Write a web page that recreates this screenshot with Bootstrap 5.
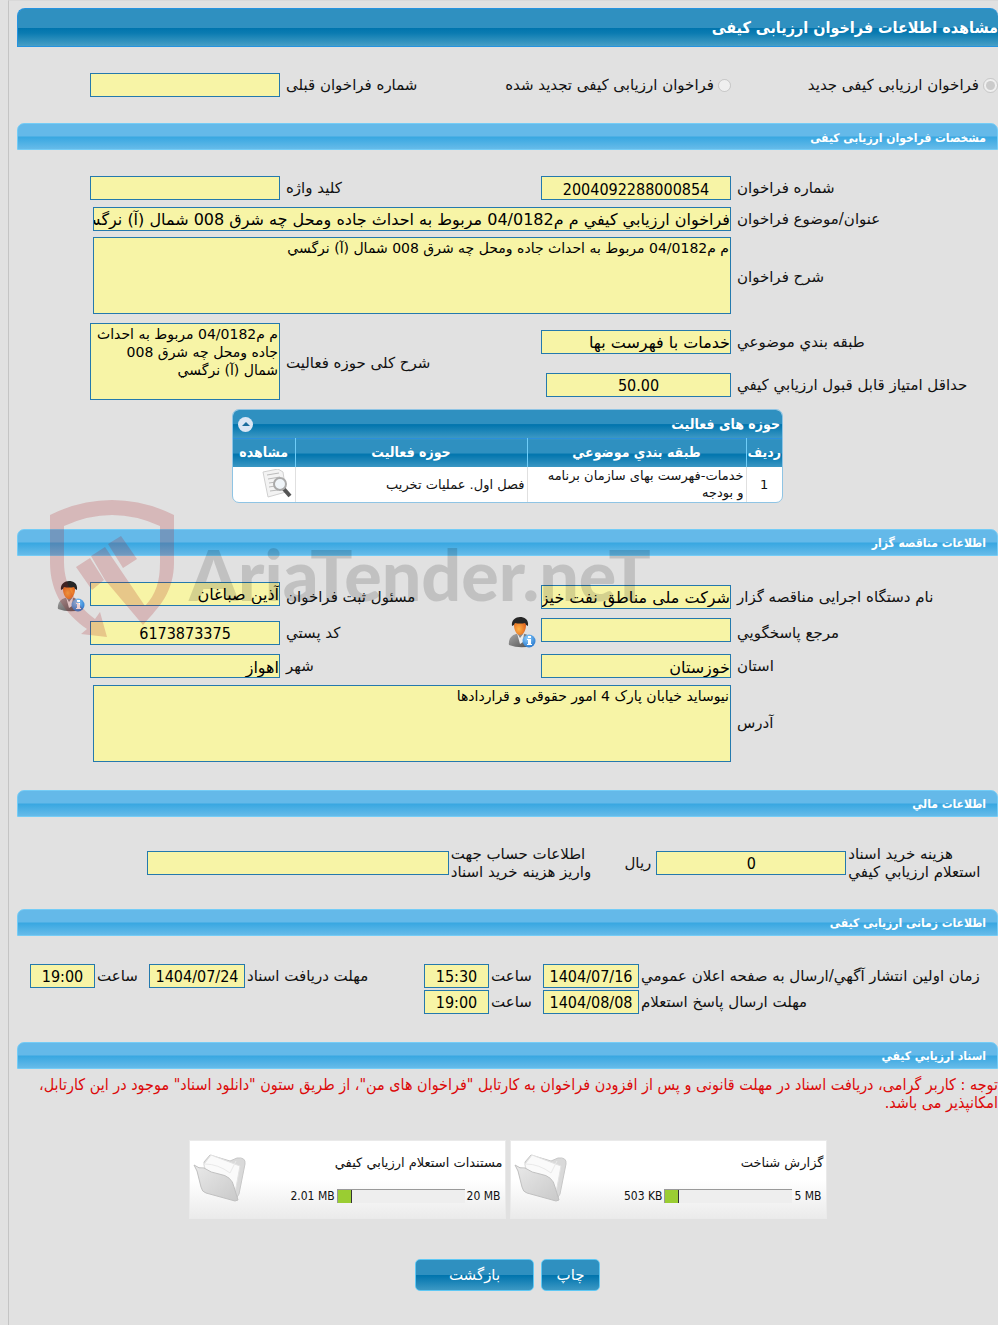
<!DOCTYPE html>
<html lang="fa" dir="rtl">
<head>
<meta charset="utf-8">
<meta name="viewport" content="width=device-width, initial-scale=1">
<title>مشاهده اطلاعات فراخوان ارزیابی کیفی</title>
<link href="https://cdn.jsdelivr.net/npm/bootstrap@5.3.0/dist/css/bootstrap.min.css" rel="stylesheet">
<style>
  body { background: #e1e1e1; color: #111; font-family: "DejaVu Sans", sans-serif; font-size: 15px; line-height: 18px; }
  .page-panel { margin-left: 8px; padding: 7px 0 24px 8px; border-left: 1px solid #c4c4c4; border-top: 1px solid #d9d9d9; min-height: 100vh; }
  .bar-main, .bar-sub, .grid-title, .grid-box th, .narrow-num, .sizes, .notice { font-family: "DejaVu Sans Condensed", "DejaVu Sans", sans-serif; }
  .bar-main { height: 39px; font-size: 16px; font-weight: bold; color: #fff; border: 1px solid #2593e0; border-right: 0; border-radius: 8px 8px 0 0;
    background: linear-gradient(#2f90c0 0 50%, #0074ad 52%, #0b7bb1 65%, #479fc6); }
  .bar-sub { height: 27px; font-size: 12px; font-weight: bold; color: #fff; border: 1px solid #74ccf6; border-radius: 7px 7px 0 0; padding: 3px 11px 0;
    background: linear-gradient(#64b9e9 0 48%, #38a7e1 52%, #66bbe9); }
  .form-grid { display: grid; grid-template-columns: 267fr 190px 261fr 190px 73fr; row-gap: 6px; align-items: center; }
  .form-kind { padding: 26px 0; }
  .form-call { padding: 26px 0 6px; grid-template-rows: 24px 25px 80px 37px 37px; }
  .form-org { padding: 26px 0 28px; grid-template-rows: 30px 30px 25px 77px; }
  .span-wide { grid-column: 2 / span 3; margin-left: 3px; }
  .lab { justify-self: end; padding-left: 6px; text-align: left; }
  .fin-grid { display: grid; grid-template-columns: 152fr 190px 208fr 302px 130fr; align-items: center; padding: 28px 0; }
  .time-grid { display: grid; grid-template-columns: 359fr 96px 54px 65px 179fr 96px 54px 65px 13fr; row-gap: 2px; align-items: center; padding: 28px 0; }
  .fin-grid .lab, .time-grid .lab { padding-left: 2px; }
  .box { border: 1px solid #2479ad; border-radius: 0; background: #f7f4a6; color: #000; font-size: 16px; line-height: 20px; height: 24px; padding: 2px 0 0; width: 100%; outline: 0; display: block; }
  textarea.box { font-size: 14px; line-height: 18px; height: 77px; padding: 1px; resize: none; overflow: hidden; }
  .pick { width: 15px; height: 15px; margin: 0; }
  .grid-box { width: 551px; max-width: 100%; border: 1px solid #8fc4e4; border-radius: 7px; overflow: hidden; background: #fff; }
  .grid-title { height: 28px; font-size: 14px; font-weight: bold; color: #fff; padding: 0 2px 0 4px; background: linear-gradient(#2f90c0 0 50%, #0074ad 52%, #3c98c4); }
  .grid-box table { width: 100%; table-layout: fixed; line-height: 17px; font-size: 13px; }
  .grid-box th { height: 28px; padding: 0; font-size: 14px; text-align: center; color: #fff; border: 0 solid #6fcdf8; border-top: 1px solid #2b8fdc; border-left-width: 1px; background: linear-gradient(#2f90c0 0 50%, #0074ad 52%, #3c98c4); white-space: nowrap; }
  .grid-box td { height: 35px; padding: 0 2px; border: 0 solid #e0e0e0; border-left-width: 1px; }
  .grid-box td:nth-child(2) { padding-left: 12px; }
  .grid-box tr > :last-child { border-left-width: 0; }
  .c-num { width: 36px; } .c-cat { width: 219px; } .c-view { width: 62px; }
  .bare-btn { border: 0; background: none; padding: 0; line-height: 0; }
  .notice { color: #dc0a0a; padding-top: 7px; font-size: 16px; }
  .docs { padding-top: 28px; }
  .doc-card { width: 317px; height: 79px; border: 1px solid #eaeaea; background: linear-gradient(#fff 50%, #ebebeb); padding: 13px 2px 0 3px; font-size: 13px; }
  .sizes { font-size: 12px; padding: 15px 2px 0 0; }
  .doc-bar { width: 128px; height: 14px; background: #eee; border-top: 1px solid #999; border-left: 1px solid #999; margin: 0 2px; }
  .doc-fill { background: #9acd32; border-right: 1px solid #333; height: 13px; }
  .actions { gap: 7px; padding-top: 40px; }
  .blue-btn { height: 32px; border: 1px solid #5fc8f4; border-radius: 5px; color: #fff; font-size: 15px; background: linear-gradient(#2f90c0 0 49%, #0074ad 51%, #3c98c4); }
  .btn-print { width: 59px; } .btn-back { width: 119px; }
  .stamp { position: absolute; left: 32px; top: -6px; pointer-events: none; z-index: 2; direction: ltr; }
  .stamp text { font-family: Lato, "Liberation Sans", sans-serif; font-weight: 900; font-size: 70px; fill: #000; fill-opacity: .14; }
</style>
</head>
<body>
<svg width="0" height="0" class="position-absolute" aria-hidden="true">
  <defs>
    <linearGradient id="gSuit" x1="0" y1="0" x2="1" y2="1"><stop offset="0" stop-color="#aaa"/><stop offset="1" stop-color="#4d4d4d"/></linearGradient>
    <radialGradient id="gFace" cx=".4" cy=".6" r=".7"><stop offset="0" stop-color="#ffb347"/><stop offset="1" stop-color="#dd5a18"/></radialGradient>
    <radialGradient id="gInfo" cx=".4" cy=".3" r=".8"><stop offset="0" stop-color="#8fd0ff"/><stop offset="1" stop-color="#1c6fc8"/></radialGradient>
    <linearGradient id="gFold" x1="0" y1="0" x2="1" y2="1"><stop offset="0" stop-color="#e9e9e9"/><stop offset="1" stop-color="#c9c9c9"/></linearGradient>
    <symbol id="person" viewBox="0 0 28 31">
      <path d="M1 28C0 22 4 18 8 17l4-1 5 1c4 1 6 4 6 9v3q-11 3-22-1z" fill="url(#gSuit)"/>
      <path d="M9 16l3 5 4-5-1 9-3 2z" fill="#eee"/>
      <path d="M6 8q0-4 6-5 6 1 6 5c0 6-3 10-6 10S6 14 6 8z" fill="url(#gFace)"/>
      <path d="M4 9C3 3 8 0 12 0s9 2 8 9q-2 0-3-3-5 1-10 0-1 3-3 3z" fill="#262626"/>
      <circle cx="21" cy="24" r="6.500" fill="url(#gInfo)"/>
      <path d="M20 19h3v2h-3zM19 22h4v5h1v1h-5v-1h1v-4h-1z" fill="#fff"/>
    </symbol>
    <symbol id="folder" viewBox="0 0 54 48">
      <path d="M11 8L17 1l20 6 7-3q9-1 8 6l-6 30-3 5L12 20z" fill="#d9d9d9" stroke="#c8c8c8"/>
      <path d="M11 10L18 1l21 8 8 3-5 27L14 24z" fill="#fafafa" stroke="#e2e2e2"/>
      <path d="M12 10q13 0 25 9l6-12" fill="none" stroke="#e9e9e9"/>
      <path d="M1 11q5 4 10 3 7 5 15 6 13 2 15 13l4 13-3 1-29-8q-4-1-5-6L4 17z" fill="url(#gFold)" stroke="#c0c0c0"/>
    </symbol>
  </defs>
</svg>

<main class="page-panel">
  <h1 class="bar-main d-flex align-items-center m-0">مشاهده اطلاعات فراخوان ارزیابی کیفی</h1>

  <div class="form-grid form-kind">
    <div class="d-flex align-items-center"><input class="pick" type="radio" name="kind" id="k1" checked disabled><label class="text-nowrap pe-1" for="k1">فراخوان ارزیابی کیفی جدید</label></div>
    <div class="d-flex align-items-center"><input class="pick" type="radio" name="kind" id="k2" disabled><label class="text-nowrap pe-1" for="k2">فراخوان ارزیابی کیفی تجدید شده</label></div>
    <label class="lab" for="prev">شماره فراخوان قبلی</label>
    <input class="box" id="prev" readonly>
  </div>

  <section>
    <h2 class="bar-sub d-flex align-items-center m-0">مشخصات فراخوان ارزیابی کیفی</h2>
    <div class="form-grid form-call">
      <label class="lab" for="num">شماره فراخوان</label><input class="box narrow-num text-center" id="num" value="2004092288000854" readonly>
      <label class="lab" for="key">کلید واژه</label><input class="box" id="key" readonly><span></span>
      <label class="lab" for="subj">عنوان/موضوع فراخوان</label>
      <div class="span-wide"><input class="box" id="subj" value="فراخوان ارزيابي کيفي م م04/0182 مربوط به احداث جاده ومحل چه شرق 008 شمال (آ) نرگسي" readonly></div><span></span>
      <label class="lab" for="desc">شرح فراخوان</label>
      <div class="span-wide align-self-start"><textarea class="box" id="desc" readonly>م م04/0182 مربوط به احداث جاده ومحل چه شرق 008 شمال (آ) نرگسي</textarea></div><span></span>
      <label class="lab" for="cat">طبقه بندي موضوعي</label><input class="box" id="cat" value="خدمات با فهرست بها" readonly>
      <label class="lab" for="scope" style="grid-column:3;grid-row:4 / span 2">شرح کلی حوزه فعالیت</label>
      <div class="align-self-start" style="grid-column:4;grid-row:4 / span 2"><textarea class="box" id="scope" readonly>م م04/0182 مربوط به احداث جاده ومحل چه شرق 008 شمال (آ) نرگسي</textarea></div>
      <label class="lab" for="min" style="grid-column:1;grid-row:5">حداقل امتیاز قابل قبول ارزيابي کيفي</label>
      <div style="grid-column:2;grid-row:5;padding-left:5px"><input class="box narrow-num text-center" id="min" value="50.00" readonly></div>
    </div>
    <div class="grid-box mx-auto">
      <div class="grid-title d-flex justify-content-between align-items-center"><span>حوزه های فعالیت</span>
        <button class="bare-btn" type="button" aria-label="بستن"><svg width="17" height="17"><circle cx="8.500" cy="8.500" r="7.500" fill="#dbe6f4"/><path d="M5 10l4-4 4 4z" fill="#1b6d9e"/></svg></button></div>
      <table>
        <thead><tr><th class="c-num">ردیف</th><th class="c-cat">طبقه بندي موضوعي</th><th>حوزه فعالیت</th><th class="c-view">مشاهده</th></tr></thead>
        <tbody><tr><td class="text-center">1</td><td>خدمات-فهرست بهای سازمان برنامه و بودجه</td><td>فصل اول. عملیات تخریب</td>
          <td><button class="bare-btn d-block" type="button" aria-label="مشاهده"><svg width="32" height="30" viewBox="0 0 32 30"><path d="M2 3L17 0l5 3 3 20-18 5z" fill="#f3f3f3" stroke="#d0d0d0"/><path d="M6 6l12-2M7 10l12-2M8 14l7-1M8 18l6-1M9 22l8-1" stroke="#bbb"/><path d="M22 19l7 8" stroke="#555" stroke-width="4"/><circle cx="19" cy="15" r="6" fill="#eef4f8" fill-opacity=".9" stroke="#aaa" stroke-width="2"/></svg></button></td></tr></tbody>
      </table>
    </div>
  </section>

  <section class="position-relative" style="padding-top:26px">
    <svg class="stamp" width="610" height="142" viewBox="49 497 610 142" role="img" aria-label="AriaTender.neT">
      <g fill="#a91418" fill-opacity=".2">
        <path fill-rule="evenodd" d="M50 515Q80 500 112 500T174 515V562C174 592 160 606 143 625L105 580 91 556 105 547 145 606C156 594 160 582 160 562V526Q136 515 112 515T64 526V562C64 588 78 606 95 619L100 612 107 637 81 634 87 629C66 614 50 594 50 562z"/>
        <path d="M76 567L90 558 104 580 92 590zM108 544L121 536 137 559 123 568z"/>
      </g>
      <text x="189" y="601">AriaTender.neT</text>
    </svg>
    <h2 class="bar-sub d-flex align-items-center m-0">اطلاعات مناقصه گزار</h2>
    <div class="form-grid form-org">
      <label class="lab" for="org">نام دستگاه اجرایی مناقصه گزار</label><input class="box" id="org" value="شرکت ملی مناطق نفت خیز جنوب" readonly>
      <label class="lab" for="resp">مسئول ثبت فراخوان</label><input class="box align-self-start" id="resp" value="آذین صباغان" readonly>
      <div class="d-flex" style="padding-right:5px"><button class="bare-btn" type="button" aria-label="اطلاعات مسئول"><svg width="28" height="31"><use href="#person"/></svg></button></div>
      <label class="lab" for="ref">مرجع پاسخگويي</label><input class="box align-self-start" id="ref" readonly>
      <div class="d-flex align-items-center justify-content-between" style="padding-right:5px"><button class="bare-btn" type="button" aria-label="اطلاعات مرجع"><svg width="28" height="31"><use href="#person"/></svg></button><label class="lab" for="zip">کد پستي</label></div>
      <input class="box narrow-num text-center" id="zip" value="6173873375" readonly><span></span>
      <label class="lab" for="prov">استان</label><input class="box" id="prov" value="خوزستان" readonly>
      <label class="lab" for="city">شهر</label><input class="box" id="city" value="اهواز" readonly><span></span>
      <label class="lab" for="addr">آدرس</label>
      <div class="span-wide"><textarea class="box" id="addr" readonly>نیوساید خیابان پارک 4 امور حقوقی و قراردادها</textarea></div>
    </div>
  </section>

  <section>
    <h2 class="bar-sub d-flex align-items-center m-0">اطلاعات مالي</h2>
    <div class="fin-grid">
      <label class="lab" for="cost">هزینه خرید اسناد<br>استعلام ارزيابي کيفي</label><input class="box narrow-num text-center" id="cost" value="0" readonly>
      <div class="d-flex justify-content-between align-items-center" style="padding-right:5px"><span>ریال</span><label class="lab" for="acc">اطلاعات حساب جهت<br>واریز هزینه خرید اسناد</label></div>
      <input class="box" id="acc" readonly>
    </div>
  </section>

  <section>
    <h2 class="bar-sub d-flex align-items-center m-0">اطلاعات زمانی ارزیابی کیفی</h2>
    <div class="time-grid">
      <label class="lab" for="d1">زمان اولین انتشار آگهي/ارسال به صفحه اعلان عمومي</label><input class="box narrow-num text-center" id="d1" value="1404/07/16" readonly>
      <label class="lab" for="t1">ساعت</label><input class="box narrow-num text-center" id="t1" value="15:30" readonly>
      <label class="lab" for="d2">مهلت دریافت اسناد</label><input class="box narrow-num text-center" id="d2" value="1404/07/24" readonly>
      <label class="lab" for="t2">ساعت</label><input class="box narrow-num text-center" id="t2" value="19:00" readonly><span></span>
      <label class="lab" for="d3">مهلت ارسال پاسخ استعلام</label><input class="box narrow-num text-center" id="d3" value="1404/08/08" readonly>
      <label class="lab" for="t3">ساعت</label><input class="box narrow-num text-center" id="t3" value="19:00" readonly>
    </div>
  </section>

  <section>
    <h2 class="bar-sub d-flex align-items-center m-0">اسناد ارزيابي کيفي</h2>
    <p class="notice m-0">توجه : کاربر گرامی، دریافت اسناد در مهلت قانونی و پس از افزودن فراخوان به کارتابل "فراخوان های من"، از طریق ستون "دانلود اسناد" موجود در این کارتابل، امکانپذیر می باشد.</p>
    <div class="docs d-flex justify-content-center gap-1">
      <div class="doc-card d-flex justify-content-between">
        <div class="flex-grow-1"><div>گزارش شناخت</div>
          <div class="sizes d-flex align-items-center justify-content-end" dir="ltr"><span>503 KB</span><div class="doc-bar"><div class="doc-fill" style="width:14px"></div></div><span>5 MB</span></div></div>
        <svg width="54" height="48"><use href="#folder"/></svg>
      </div>
      <div class="doc-card d-flex justify-content-between">
        <div class="flex-grow-1"><div>مستندات استعلام ارزيابي کيفي</div>
          <div class="sizes d-flex align-items-center justify-content-end" dir="ltr"><span>2.01 MB</span><div class="doc-bar"><div class="doc-fill" style="width:14px"></div></div><span>20 MB</span></div></div>
        <svg width="54" height="48"><use href="#folder"/></svg>
      </div>
    </div>
    <div class="actions d-flex justify-content-center">
      <button class="blue-btn btn-print" type="button">چاپ</button>
      <button class="blue-btn btn-back" type="button">بازگشت</button>
    </div>
  </section>
</main>
<script src="https://cdn.jsdelivr.net/npm/bootstrap@5.3.0/dist/js/bootstrap.bundle.min.js"></script>
</body>
</html>
